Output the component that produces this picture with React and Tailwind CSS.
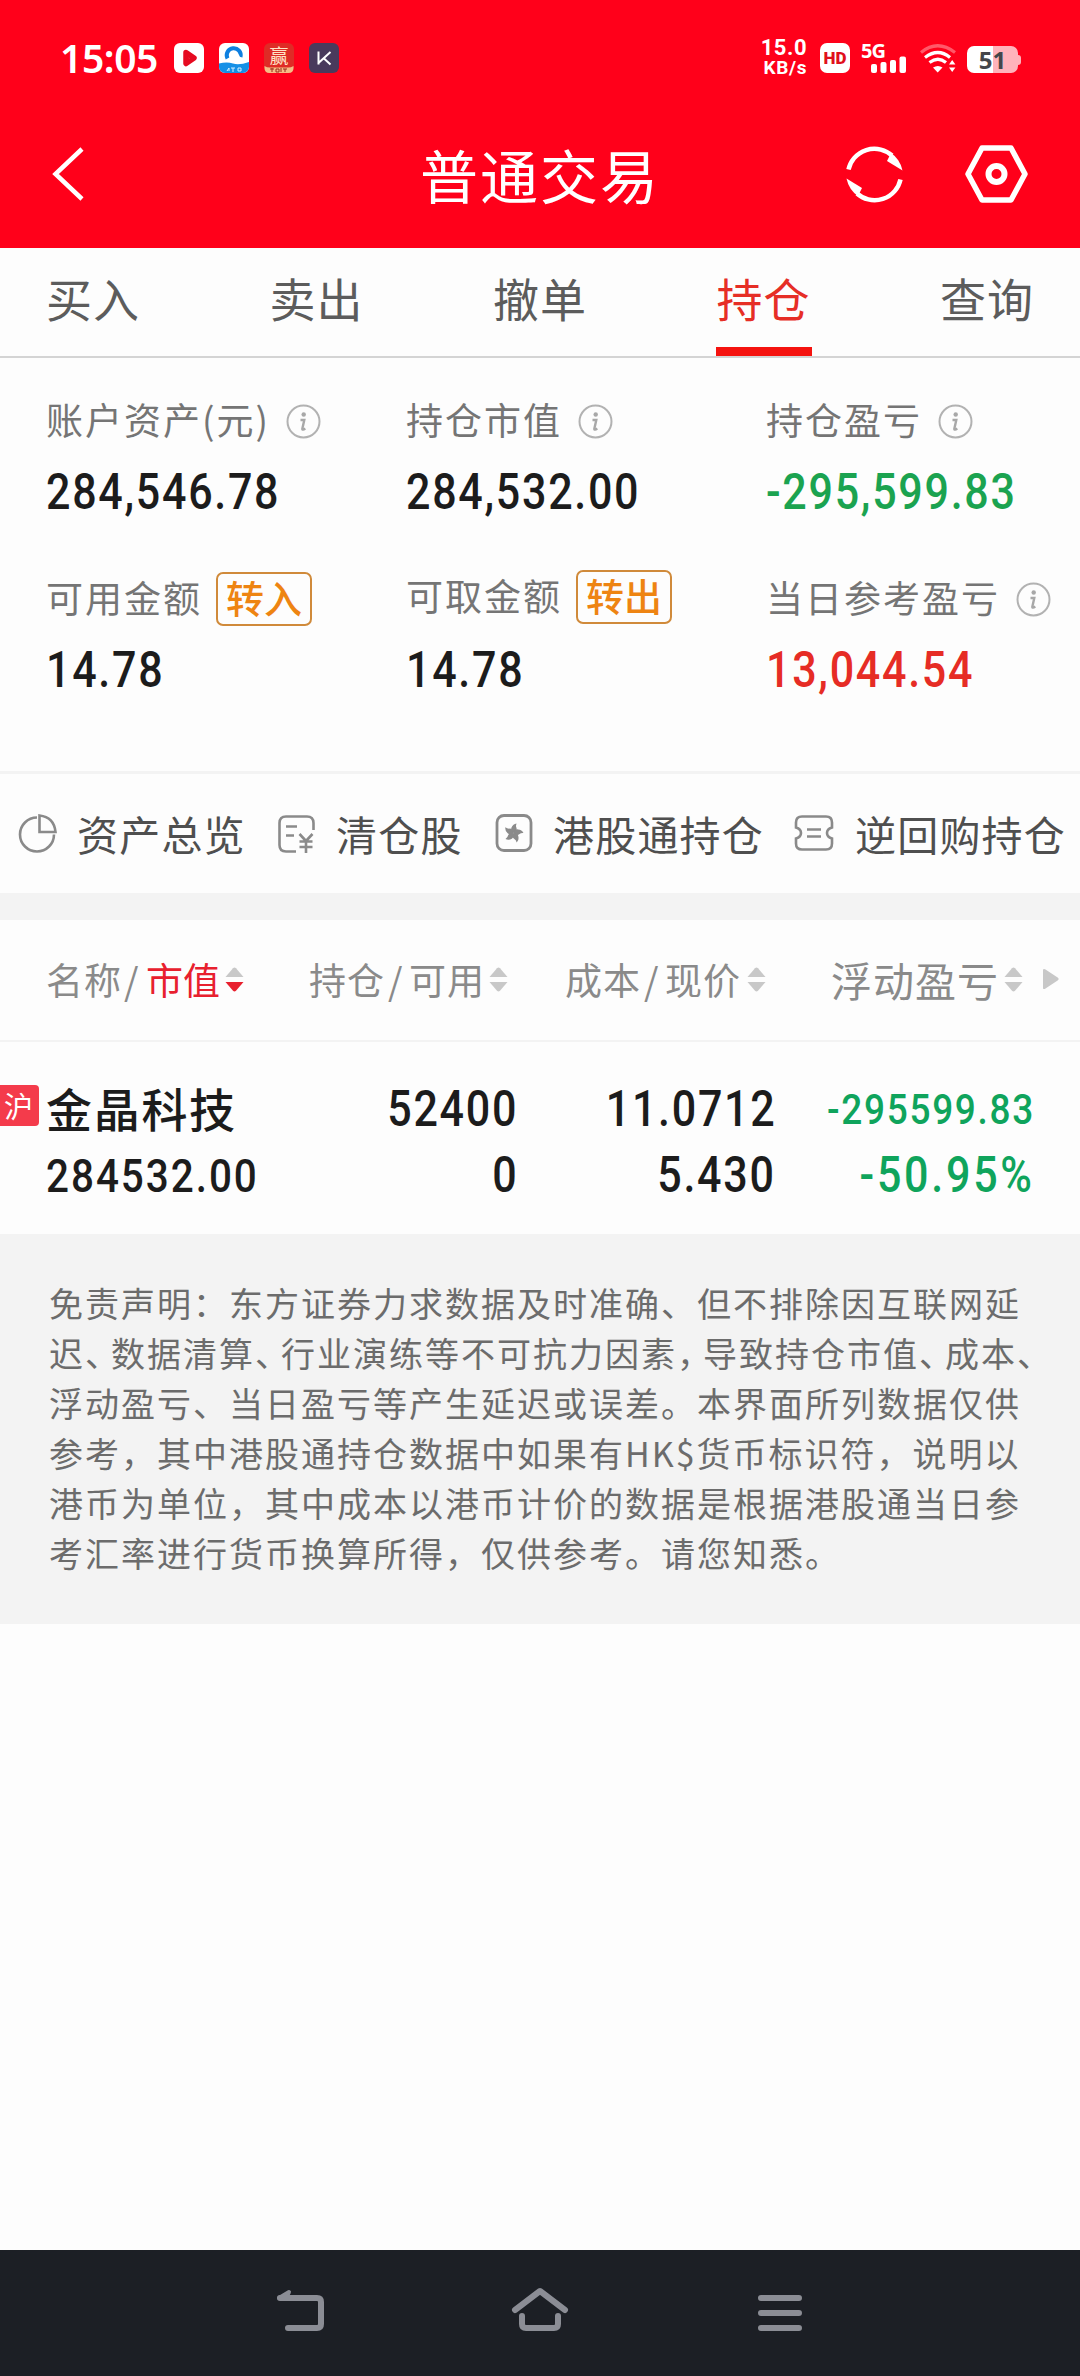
import clsx from 'clsx';

const TABS = ['买入', '卖出', '撤单', '持仓', '查询'];
const ACTIVE_TAB = '持仓';

const DISCLAIMER = [
  '免责声明：东方证券力求数据及时准确、但不排除因互联网延',
  '迟、数据清算、行业演练等不可抗力因素，导致持仓市值、成本、',
  '浮动盈亏、当日盈亏等产生延迟或误差。本界面所列数据仅供',
  '参考，其中港股通持仓数据中如果有HK$货币标识符，说明以',
  '港币为单位，其中成本以港币计价的数据是根据港股通当日参',
  '考汇率进行货币换算所得，仅供参考。请您知悉。',
];

const PETAL_ANGLES = [0, 72, 144, 216, 288];

function Num({ children, className, right = false, tracking = 'tracking-[2px]' }) {
  return (
    <span
      className={clsx(
        "inline-block whitespace-nowrap font-['Roboto',sans-serif] font-medium scale-x-[0.86]",
        right ? '-mr-[2px] origin-right' : 'origin-left',
        tracking,
        className
      )}
    >
      {children}
    </span>
  );
}

function PlayAppIcon() {
  return (
    <svg className="size-[30px]" viewBox="0 0 30 30">
      <rect width="30" height="30" rx="6" fill="#fff" />
      <path
        d="M12 9.500L20 15l-8 5.500z"
        fill="#fff"
        stroke="#e60a20"
        strokeWidth="5.500"
        strokeLinejoin="round"
      />
    </svg>
  );
}

function BrowserAppIcon() {
  return (
    <svg className="size-[30px]" viewBox="0 0 30 30">
      <rect width="30" height="30" rx="6" fill="#fff" />
      <path d="M0 20.500q8-2 14 0t16-1.500v5a6 6 0 0 1-6 6H6a6 6 0 0 1-6-6z" fill="#1590e6" />
      <path d="M8.500 15.500a7 7 0 1 1 13-1.500" fill="none" stroke="#0d7fe0" strokeWidth="4" />
      <circle cx="16" cy="15" r="5" fill="#fff" />
      <path d="M8 28l2-3v3M12 25h4M14 25v4M19 25h3v3h-3z" stroke="#d5efff" strokeWidth="1" fill="none" />
    </svg>
  );
}

function WinAppIcon() {
  return (
    <div className="relative flex size-[30px] justify-center rounded-[6px] bg-[#df2b26]">
      <span className="font-['Noto_Sans_CJK_SC',sans-serif] text-[19px] leading-[24px] text-[#ffe3c8]">赢</span>
      <svg className="absolute inset-0" viewBox="0 0 30 30">
        <path d="M.5 23q3 2 7 1.500h15q4 .5 7-1.500v2q0 5-5 5H5.500q-5 0-5-5z" fill="#f5bd86" />
        <path d="M6 26h4M8 25v4M12 26h3v3h-3zM17 25v4M19 26h4M21 26v3" stroke="#9a2b1c" strokeWidth="1" fill="none" />
      </svg>
    </div>
  );
}

function KAppIcon() {
  return (
    <svg className="size-[30px]" viewBox="0 0 30 30">
      <rect width="30" height="30" rx="6" fill="#493a5c" />
      <path d="M9.500 8.500v13M21.500 9L10 19.500M15 15.500l6.500 6" stroke="#fff" strokeWidth="2" fill="none" />
    </svg>
  );
}

function SignalIcon() {
  return (
    <div className="relative ml-[11px] h-[30px] w-[46px]">
      <span className="absolute top-0 left-0 font-['Noto_Sans',sans-serif] text-[20px] leading-[15px] font-bold tracking-[-1px] text-white">
        5G
      </span>
      <svg className="absolute inset-0" viewBox="0 0 46 30">
        <g fill="#fff">
          <rect x="10" y="21" width="6" height="9" rx="2" />
          <rect x="19.500" y="19" width="6" height="11" rx="2" />
          <rect x="29" y="17" width="6" height="13" rx="2" />
          <rect x="38.500" y="13.500" width="6.500" height="16.500" rx="2" />
        </g>
      </svg>
    </div>
  );
}

function WifiIcon() {
  return (
    <svg className="ml-[13px] h-[30px] w-[36px]" viewBox="0 0 36 30">
      <g fill="none" stroke="#fff" strokeWidth="3.200">
        <path d="M1 9.500Q17.500-4 35 9.500" opacity=".35" />
        <path d="M5 14.500Q18 4.500 30 14.500" />
        <path d="M9.500 19.500Q18 13 26 19.500" />
      </g>
      <path d="M13 24.500q5-3 9.500 0l-4.800 5z" fill="#fff" />
      <path d="M29 21.500l3.200-4.500 3.200 4.500zM29 24.500l3.200 4.500 3.200-4.500z" fill="#fff" />
    </svg>
  );
}

function StatusBar() {
  return (
    <div className="flex h-[116px] items-center pr-[59px] pl-[60px]">
      <span className="w-[114px] pb-[2px] font-['Noto_Sans',sans-serif] text-[39px] leading-none font-semibold tracking-[-0.4px] text-white">
        15:05
      </span>
      <div className="flex gap-[15px]">
        <PlayAppIcon />
        <BrowserAppIcon />
        <WinAppIcon />
        <KAppIcon />
      </div>
      <div className="ml-auto flex items-center">
        <div className="mr-[13px] flex w-[47px] flex-col items-end font-['Roboto',sans-serif] font-bold text-white">
          <div className="text-[22px] leading-[20px] tracking-[0.5px]">15.0</div>
          <div className="text-[19px] leading-[20px] tracking-[0.6px]">KB/s</div>
        </div>
        <div className="flex size-[30px] items-center justify-center rounded-[7px] bg-white font-['Roboto',sans-serif] text-[17px] leading-none font-black text-[#e0101c]">
          HD
        </div>
        <SignalIcon />
        <WifiIcon />
        <div className="mt-[3px] ml-[11px] flex items-center">
          <div className="flex h-[27px] w-[51px] items-center justify-center rounded-[7px] bg-[linear-gradient(90deg,#fff_51%,#ffb3bb_51%)] font-['Noto_Sans',sans-serif] text-[24px] leading-none font-bold text-[#44464a]">
            51
          </div>
          <div className="h-[10px] w-[3px] rounded-r-[3px] bg-[#ffb3bb]" />
        </div>
      </div>
    </div>
  );
}

function TitleBar() {
  return (
    <div className="relative flex h-[116px] items-center justify-between pr-[52px] pl-[52px]">
      <svg className="h-[54px] w-[34px]" viewBox="0 0 34 54">
        <path d="M30 2L3.500 27 30 52" fill="none" stroke="#fff" strokeWidth="4.500" />
      </svg>
      <h1 className="absolute inset-x-0 text-center text-[58px] leading-[58px] font-normal tracking-[2px] text-white">
        普通交易
      </h1>
      <div className="flex items-center gap-[62px]">
        <svg className="size-[57px]" viewBox="0 0 57 57">
          <g id="arc">
            <path d="M2.500 23.500A26.500 26.500 0 0 1 46 9.500" fill="none" stroke="#fff" strokeWidth="4.500" />
            <path d="M56.500 24.500Q54 13 45 7L41 15z" fill="#fff" />
          </g>
          <use href="#arc" transform="rotate(180 28.500 28.500)" />
        </svg>
        <svg className="h-[58px] w-[63px]" viewBox="0 0 63 58">
          <path d="M17 3h29L60 29 46 55H17L3 29z" fill="none" stroke="#fff" strokeWidth="5.500" strokeLinejoin="round" />
          <circle cx="31.500" cy="29" r="8" fill="none" stroke="#fff" strokeWidth="6" />
        </svg>
      </div>
    </div>
  );
}

function Tabs() {
  return (
    <nav className="flex h-[110px] justify-between border-b-2 border-[#d4d4d4] px-[46px]">
      {TABS.map((tab) => (
        <div
          key={tab}
          className={clsx(
            'relative flex w-[94px] justify-center pt-[25px] text-[46px] leading-[48px] tracking-[1px] whitespace-nowrap',
            tab === ACTIVE_TAB ? 'text-[#e62e26]' : 'text-[#5c5c5c]'
          )}
        >
          {tab}
          {tab === ACTIVE_TAB && <span className="absolute -right-px bottom-0 -left-px h-[9px] bg-[#f5130f]" />}
        </div>
      ))}
    </nav>
  );
}

function InfoIcon() {
  return (
    <svg className="ml-[16px] size-[35px] shrink-0" viewBox="0 0 35 35">
      <circle cx="17.500" cy="17.500" r="16" fill="none" stroke="#b2b2b2" strokeWidth="2" />
      <circle cx="17.700" cy="10.500" r="2.200" fill="#a8a8a8" />
      <path d="M14.500 16h3.800l-2 9q0 1.500 3-.5" fill="none" stroke="#a8a8a8" strokeWidth="2.400" />
    </svg>
  );
}

function Metric({ label, value, action, info, tone = 'text-[#1c1c1c]', labelClass }) {
  return (
    <div className="h-[178px]">
      <div className={clsx('flex h-[54px] items-center whitespace-nowrap text-[#757575]', labelClass)}>
        <span className="pb-[4px] text-[37px] leading-[50px] tracking-[2px]">{label}</span>
        {info && <InfoIcon />}
        {action && (
          <span className="ml-[14px] flex h-[54px] w-[96px] items-center justify-center rounded-[7px] border-2 border-[#d08a3a] pb-[4px] text-[38px] leading-[46px] font-medium text-[#ee8412]">
            {action}
          </span>
        )}
      </div>
      <div className="flex h-[87px] items-center">
        <Num className={clsx('text-[50px] leading-none', tone)}>{value}</Num>
      </div>
    </div>
  );
}

function Summary() {
  return (
    <section className="grid h-[416px] grid-cols-[360px_360px_1fr] content-start border-b-3 border-[#f3f3f3] pt-[36px] pl-[46px]">
      <Metric label="账户资产(元)" value="284,546.78" info />
      <Metric label="持仓市值" value="284,532.00" info />
      <Metric label="持仓盈亏" value="-295,599.83" info tone="text-[#1ba350]" />
      <Metric label="可用金额" value="14.78" action="转入" />
      <Metric label="可取金额" value="14.78" action="转出" labelClass="relative -top-[2px]" />
      <Metric label="当日参考盈亏" value="13,044.54" info tone="text-[#e62c25]" />
    </section>
  );
}

function QuickLinks() {
  return (
    <section className="flex h-[119px] items-center pb-px text-[41px] leading-[48px] tracking-[1.2px] whitespace-nowrap text-[#4f4f4f]">
      <svg className="mr-[20px] ml-[18px] size-[39px] shrink-0" viewBox="0 0 39 39" fill="none" stroke="#8a8a8a" strokeWidth="2.600">
        <path d="M19 3.500A17 17 0 1 0 36 20.500" />
        <path d="M21.500 1.500v16.500H37.500Q36 3 21.500 1.500z" />
      </svg>
      <span className="w-[170px]">资产总览</span>
      <svg className="mr-[20px] ml-[30px] size-[39px] shrink-0" viewBox="0 0 39 39" fill="none" stroke="#8a8a8a" strokeWidth="2.600">
        <path d="M36.500 16V9q0-6.500-6.500-6.500H9Q2.500 2.500 2.500 9v22q0 6.500 6.500 6.500h10" />
        <path d="M9 12.500h11M9 21.500h8" />
        <path d="M22.500 20l6.500 7 6.500-7M29 27v12M22.500 27.500h13M22.500 33h13" />
      </svg>
      <span className="w-[128px]">清仓股</span>
      <svg className="mr-[20px] ml-[31px] size-[38px] shrink-0" viewBox="0 0 38 38" fill="none" stroke="#8a8a8a" strokeWidth="2.800">
        <rect x="2" y="1.500" width="34" height="35" rx="7" />
        <g fill="#8a8a8a" stroke="none">
          {PETAL_ANGLES.map((angle) => (
            <path key={angle} d="M18.500 19q-3.500-2-2-5.500t5-4q-1 2.200 0 4.500t-3 5z" transform={`rotate(${angle} 18.500 19)`} />
          ))}
        </g>
      </svg>
      <span className="w-[212px]">港股通持仓</span>
      <svg className="mr-[21px] ml-[29px] h-[38px] w-[40px] shrink-0" viewBox="0 0 40 38" fill="none" stroke="#8a8a8a" strokeWidth="2.600">
        <path d="M8 2.500h24q6 0 6 6v5q-5 1.500-5 5.500t5 5.500v5q0 6-6 6H8q-6 0-6-6v-5q5-1.500 5-5.500t-5-5.500v-5q0-6 6-6z" />
        <path d="M13 15.500h14M13 22.500h14" />
      </svg>
      <span>逆回购持仓</span>
    </section>
  );
}

function SortIcon({ desc = false, className }) {
  return (
    <svg className={clsx('h-[25px] w-[19px] shrink-0', className)} viewBox="0 0 19 25">
      <path d="M.5 10L8 1.200q1.500-1.200 3 0L18.500 10z" fill="#c8c8c8" />
      <path d="M.5 15L8 23.800q1.500 1.200 3 0L18.500 15z" fill={desc ? '#e8202e' : '#c8c8c8'} />
    </svg>
  );
}

function TableHead() {
  return (
    <div className="flex h-[122px] items-center border-b-2 border-[#f3f3f3] pb-[2px] pl-[46px] text-[37px] leading-[48px] whitespace-nowrap text-[#8a8a8a]">
      <div className="flex w-[263px] items-center">
        <span className="tracking-[1px]">名称</span>
        <span className="ml-[2px] w-[22px]">/</span>
        <span className="text-[#e8202e]">市值</span>
        <SortIcon desc className="ml-[5px]" />
      </div>
      <div className="flex w-[256px] items-center">
        <span className="tracking-[1px]">持仓</span>
        <span className="ml-[3px] w-[21px]">/</span>
        <span className="tracking-[1px]">可用</span>
        <SortIcon className="ml-[4px]" />
      </div>
      <div className="flex w-[266px] items-center">
        <span className="tracking-[1px]">成本</span>
        <span className="ml-[3px] w-[21px]">/</span>
        <span className="tracking-[1px]">现价</span>
        <SortIcon className="ml-[6px]" />
      </div>
      <span className="text-[41px] tracking-[1px]">浮动盈亏</span>
      <SortIcon className="ml-[5px]" />
      <svg className="ml-[19px] h-[22px] w-[18px]" viewBox="0 0 18 22">
        <path d="M1 1.500q1-1 2.500 0L16 9.800q1.500 1.200 0 2.400L3.500 20.500q-1.500 1-2.500 0z" fill="#c8c8c8" />
      </svg>
    </div>
  );
}

function HoldingRow() {
  return (
    <div className="flex h-[192px] pt-[34px] text-[#1c1c1c]">
      <div className="relative w-[256px] pl-[46px]">
        <span className="absolute top-[9px] left-0 flex h-[41px] w-[39px] items-center rounded-r-[4px] bg-[#f43b4b] pb-[2px] pl-[4px] text-[29px] leading-[38px] text-white">
          沪
        </span>
        <div className="flex h-[66px] items-center pb-[4px] text-[46px] leading-[60px] font-medium tracking-[1.700px] whitespace-nowrap">
          金晶科技
        </div>
        <div className="flex h-[66px] items-center">
          <Num className="text-[47px] leading-none" tracking="tracking-[2.300px]">284532.00</Num>
        </div>
      </div>
      <div className="w-[260px]">
        <div className="flex h-[66px] items-center justify-end">
          <Num right className="text-[50px] leading-none">52400</Num>
        </div>
        <div className="flex h-[66px] items-center justify-end">
          <Num right className="text-[50px] leading-none">0</Num>
        </div>
      </div>
      <div className="w-[258px]">
        <div className="flex h-[66px] items-center justify-end">
          <Num right className="text-[50px] leading-none">11.0712</Num>
        </div>
        <div className="flex h-[66px] items-center justify-end">
          <Num right className="text-[50px] leading-none">5.430</Num>
        </div>
      </div>
      <div className="w-[259px] text-[#0fa45c]">
        <div className="flex h-[66px] items-center justify-end">
          <Num right className="text-[43px] leading-none">-295599.83</Num>
        </div>
        <div className="flex h-[66px] items-center justify-end">
          <Num right className="text-[50px] leading-none" tracking="tracking-[3.200px]">-50.95%</Num>
        </div>
      </div>
    </div>
  );
}

function Disclaimer() {
  return (
    <section className="h-[390px] bg-[#f3f3f3] pt-[44px] pl-[49px] text-[34px] leading-[50px] tracking-[2px] whitespace-nowrap text-[#6c6c6c]">
      {DISCLAIMER.map((line, i) => (
        <p key={line}>
          {/* the second line squeezes its punctuation to hold two more characters */}
          {i === 1
            ? line.split(/([、，])/).map((part, j) => (
                <span key={j} className={clsx(j % 2 === 1 && 'tracking-[-8px]')}>
                  {part}
                </span>
              ))
            : line}
        </p>
      ))}
    </section>
  );
}

function NavBar() {
  return (
    <footer className="mt-auto flex h-[126px] gap-[185px] bg-[#1c1f25] pt-[36px] pl-[274px]">
      <svg className="h-[48px] w-[52px]" viewBox="0 0 52 48" fill="none" stroke="#8b8d95" strokeWidth="6" strokeLinecap="round" strokeLinejoin="round">
        <path d="M6 12h37q4 0 4 4v22q0 4-4 4H14" />
        <path d="M15 6L5 12h7z" fill="#8b8d95" strokeWidth="4" />
      </svg>
      <svg className="mr-px -ml-px h-[48px] w-[60px]" viewBox="0 0 60 48" fill="none" stroke="#8b8d95" strokeWidth="6" strokeLinecap="round" strokeLinejoin="round">
        <path d="M5 24L30 5l25 19" />
        <path d="M12 30v8q0 4 4 4h28q4 0 4-4v-8" />
      </svg>
      <svg className="h-[48px] w-[48px]" viewBox="0 0 48 48" stroke="#8b8d95" strokeWidth="6" strokeLinecap="round">
        <path d="M5 12h38M5 27h38M5 42h38" />
      </svg>
    </footer>
  );
}

export default function App() {
  return (
    <div className="flex h-[2376px] w-[1080px] flex-col overflow-hidden bg-[#fdfdfd] font-['Noto_Sans_CJK_SC',sans-serif]">
      <header className="h-[248px] bg-[#ff001a]">
        <StatusBar />
        <TitleBar />
      </header>
      <Tabs />
      <Summary />
      <QuickLinks />
      <div className="h-[27px] bg-[#f3f3f3]" />
      <TableHead />
      <HoldingRow />
      <Disclaimer />
      <NavBar />
    </div>
  );
}
